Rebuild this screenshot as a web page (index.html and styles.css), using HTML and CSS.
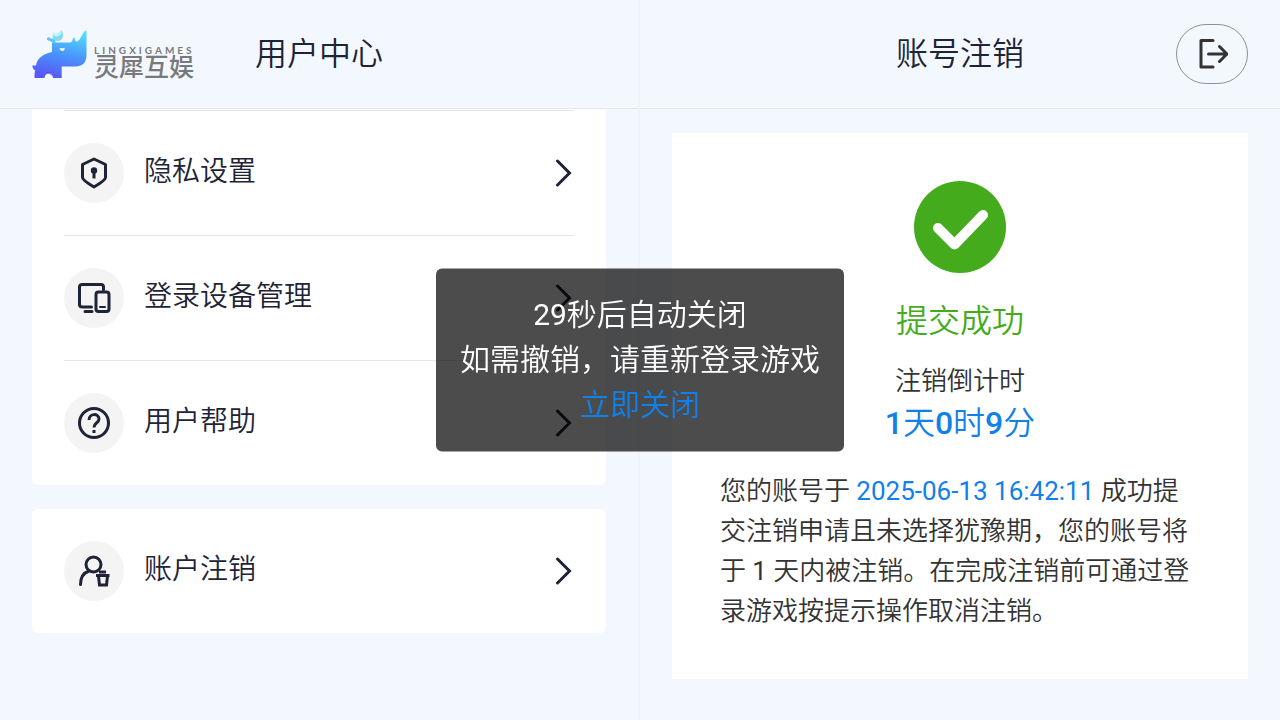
FILE: index.html
```html
<!DOCTYPE html>
<html lang="zh-CN">
<head>
<meta charset="utf-8">
<meta name="viewport" content="width=device-width, initial-scale=1">
<title>用户中心</title>
<link rel="stylesheet" href="styles.css">
</head>
<body>
<div class="page">
  <section class="pane pane-menu">
    <header class="bar">
      <div class="logo">
        <svg class="logo-mark" viewBox="0 0 56 50" aria-hidden="true">
          <defs>
            <linearGradient id="rhino" x1="0.65" y1="0" x2="0.4" y2="1">
              <stop offset="0" stop-color="#52ddfb"/>
              <stop offset="0.5" stop-color="#4a94fb"/>
              <stop offset="1" stop-color="#5757fa"/>
            </linearGradient>
          </defs>
          <path fill="url(#rhino)" d="M53.500 1.500 Q54.500 1 54.500 2.500 V26 C54.500 34 50 37.500 43 37.500 H29.700 V49 H21 C21 42 13 42 12.500 49 H2.500 C2.500 45 2.600 43 3.300 41.500 C1.500 41 0.500 39 0.300 36.500 H4 C5 31 9 25 20 23 V14.500 Q20 13.500 21 13.500 H38 C41 13.500 40.500 9 42 8.500 C43.500 8.500 42 13 45 12.500 C48 12 50 4 53.500 1.500 Z"/>
          <path fill="#3f3fd8" opacity=".6" d="M13 46 C14 41.500 20 41.500 21 48 C19 45 16 44 13 46Z"/>
          <path fill="#fff" d="M27.500 19.200 H33 C32 22.800 28.500 22.800 27.500 19.200Z"/>
          <path fill="#62c3f2" d="M15 9 L17 8 L18.500 9.500 H21 L23.500 11 V14 H20.500 C20 12 17 12.500 15 10.500 Z"/>
          <path fill="#7fd9f8" d="M21 3.500 C24 6.500 27.500 4.500 29.500 1 C32.500 6 31 12 25.500 12 C21.500 12 20 8 21 3.500Z"/>
          <path fill="#b9f5fd" d="M21 3.500 C24 6.500 27.500 4.500 29.500 1.500 C30.500 6 25 9.500 21 6.500Z"/>
        </svg>
        <div class="logo-words">
          <span class="logo-en">LINGXIGAMES</span>
          <span class="logo-cn">灵犀互娱</span>
        </div>
      </div>
      <h1 class="bar-title">用户中心</h1>
    </header>
    <nav class="menu">
      <div class="card card-scrolled">
        <a class="row" href="#privacy">
          <span class="row-icon"><svg viewBox="0 0 36 36" aria-hidden="true"><path d="M18 4 L29.500 9.500 V22.500 C29.500 25 23 29 18 32 C13 29 6.500 25 6.500 22.500 V9.500 Z"/><circle class="solid" cx="18" cy="15.500" r="3.200"/><path class="stem" d="M18 16V23.500"/></svg></span>
          <span class="row-label">隐私设置</span>
          <svg class="chevron" viewBox="0 0 20 28" aria-hidden="true"><path d="M3.500 2 L15.500 14 L3.500 26"/></svg>
        </a>
        <a class="row" href="#devices">
          <span class="row-icon"><svg viewBox="0 0 36 36" aria-hidden="true"><path d="M27.500 9.500 V7 Q27.500 4.500 25 4.500 H6.500 Q3.500 4.500 3.500 7 V24.500 Q3.500 27 6.500 27 H15.500 M9 31.500 H16"/><rect x="20" y="12" width="13" height="19.500" rx="2.500"/><path class="fine" d="M24 27h5"/></svg></span>
          <span class="row-label">登录设备管理</span>
          <svg class="chevron" viewBox="0 0 20 28" aria-hidden="true"><path d="M3.500 2 L15.500 14 L3.500 26"/></svg>
        </a>
        <a class="row" href="#help">
          <span class="row-icon"><svg viewBox="0 0 36 36" aria-hidden="true"><circle cx="18" cy="18" r="14.500"/><path class="mark" d="M13 15 C13 8 23 8 23 14 C23 18 18 17.500 18 22.500 M18 25V28"/></svg></span>
          <span class="row-label">用户帮助</span>
          <svg class="chevron" viewBox="0 0 20 28" aria-hidden="true"><path d="M3.500 2 L15.500 14 L3.500 26"/></svg>
        </a>
      </div>
      <div class="card">
        <a class="row" href="#cancel">
          <span class="row-icon"><svg viewBox="0 0 36 36" aria-hidden="true"><circle cx="17.500" cy="11.500" r="7.500"/><path d="M4.500 31.500 C4.500 24 8.500 19.500 13 18"/><path class="bin" d="M20 22.500 H33.500 M23 19 H30 M22.500 23 L23.500 32 H30.500 L31.500 23"/></svg></span>
          <span class="row-label">账户注销</span>
          <svg class="chevron" viewBox="0 0 20 28" aria-hidden="true"><path d="M3.500 2 L15.500 14 L3.500 26"/></svg>
        </a>
      </div>
    </nav>
  </section>

  <section class="pane pane-detail">
    <header class="bar">
      <h2 class="bar-title">账号注销</h2>
      <button class="exit" type="button" aria-label="退出">
        <svg viewBox="0 0 32 32" aria-hidden="true"><path d="M17 2.500 H5 V29 H17 M12.500 16 H31 M23.500 8.500 L31 16 L23.500 23.500"/></svg>
      </button>
    </header>
    <main class="result">
      <svg class="result-icon" viewBox="0 0 92 92" aria-hidden="true"><circle cx="46" cy="46" r="46"/><path d="M24 47 L40.500 63.500 L69 34"/></svg>
      <p class="result-title">提交成功</p>
      <p class="count-label">注销倒计时</p>
      <p class="count-value"><b>1</b>天<b>0</b>时<b>9</b>分</p>
      <p class="result-text">您的账号于 <time class="number time" datetime="2025-06-13T16:42:11">2025-06-13 16:42:11</time> 成功提交注销申请且未选择犹豫期，您的账号将于 <span class="number">1</span> 天内被注销。在完成注销前可通过登录游戏按提示操作取消注销。</p>
    </main>
  </section>
</div>

<div class="toast" role="alert">
  <p><span class="number">29</span>秒后自动关闭</p>
  <p>如需撤销，请重新登录游戏</p>
  <button class="toast-close" type="button">立即关闭</button>
</div>
</body>
</html>
```
FILE: styles.css
```css
* {
  box-sizing: border-box;
}

body {
  margin: 0;
  background: #f3f8ff;
  color: #333;
  font-family: Roboto, "Noto Sans CJK SC", sans-serif;
  font-weight: 350;
}

h1, h2, p {
  margin: 0;
  font-weight: inherit;
}

.number {
  font-weight: 400;
}

.page {
  display: grid;
  grid-template-columns: 1fr 1fr;
  min-height: 100vh;
}

.pane-menu {
  border-right: 2px solid #f1f3f6;
}

.bar {
  display: grid;
  grid-template-columns: 1fr auto 1fr;
  align-items: center;
  height: 109px;
  padding: 0 32px;
  border-bottom: 1px solid #e3e7ee;
}

.bar-title {
  grid-column: 2;
  color: #1e2337;
  font-size: 32px;
  line-height: 48px;
}

/* Brand */
.logo {
  display: flex;
  align-items: center;
  gap: 6px;
}

.logo-mark {
  flex: none;
  width: 56px;
  height: 50px;
}

.logo-words {
  display: flex;
  flex-direction: column;
  padding-top: 18px;
  color: #78797d;
  white-space: nowrap;
}

.logo-en {
  font-family: Lato, sans-serif;
  font-size: 10px;
  font-weight: 700;
  line-height: 10px;
  letter-spacing: 3px;
}

.logo-cn {
  font-size: 25px;
  font-weight: 500;
  line-height: 26px;
}

/* Menu */
.card {
  margin: 0 32px 24px;
  padding: 0 32px;
  border-radius: 6px;
  background: #fff;
}

.card-scrolled {
  padding-top: 1px;
  border-radius: 0 0 6px 6px;
}

.row {
  display: flex;
  align-items: center;
  gap: 20px;
  height: 124px;
  color: #1e2337;
  text-decoration: none;
}

.card-scrolled .row {
  height: 125px;
  border-top: 1px solid #e6e6e6;
}

.row-icon {
  display: grid;
  place-items: center;
  width: 60px;
  height: 60px;
  border-radius: 50%;
  background: #f4f4f4;
}

.row-icon svg {
  width: 36px;
  height: 36px;
  fill: none;
  stroke: #1e2337;
  stroke-width: 3;
  stroke-linecap: round;
  stroke-linejoin: round;
}

.row-icon .solid {
  fill: #1e2337;
  stroke: none;
}

.row-icon .stem,
.row-icon .mark {
  stroke-linecap: butt;
}

.row-icon .fine {
  stroke-width: 2;
}

.row-icon .bin {
  stroke-linecap: butt;
  stroke-linejoin: miter;
}

.row-label {
  flex: 1;
  padding-bottom: 2px;
  font-size: 28px;
  line-height: 42px;
}

.chevron {
  width: 20px;
  height: 28px;
  fill: none;
  stroke: #1e2337;
  stroke-width: 3;
  stroke-linecap: round;
}

/* Header action */
.exit {
  display: grid;
  grid-column: 3;
  justify-self: end;
  place-items: center;
  width: 72px;
  height: 60px;
  padding: 0;
  border: 1px solid #8d909b;
  border-radius: 30px;
  background: none;
}

.exit svg {
  width: 32px;
  height: 32px;
  fill: none;
  stroke: #333;
  stroke-width: 3;
  stroke-linecap: round;
  stroke-linejoin: round;
}

/* Result */
.result {
  display: flex;
  flex-direction: column;
  align-items: center;
  margin: 24px 32px;
  padding: 48px;
  background: #fff;
}

.result-icon {
  width: 92px;
  height: 92px;
  fill: #44ab1c;
}

.result-icon path {
  fill: none;
  stroke: #fff;
  stroke-width: 10;
  stroke-linecap: round;
  stroke-linejoin: round;
}

.result-title {
  margin: 24px 0 16px;
  color: #44ab1c;
  font-size: 32px;
  line-height: 48px;
}

.count-label {
  font-size: 26px;
  line-height: 40px;
}

.count-value {
  margin-bottom: 26px;
  color: #1180ea;
  font-size: 32px;
  line-height: 44px;
}

.count-value b {
  font-weight: 500;
}

.result-text {
  align-self: stretch;
  font-size: 26px;
  line-height: 40px;
}

.time {
  color: #1180ea;
}

/* Toast */
.toast {
  position: fixed;
  top: 50%;
  left: 50%;
  padding: 23px 24px 25px;
  border-radius: 6px;
  background: rgba(0, 0, 0, 0.7);
  color: #fff;
  font-size: 30px;
  line-height: 45px;
  text-align: center;
  white-space: nowrap;
  transform: translate(-50%, -50%);
}

.toast-close {
  display: block;
  margin: 0 auto;
  padding: 0;
  border: 0;
  background: none;
  color: #1180ea;
  font: inherit;
}
```
